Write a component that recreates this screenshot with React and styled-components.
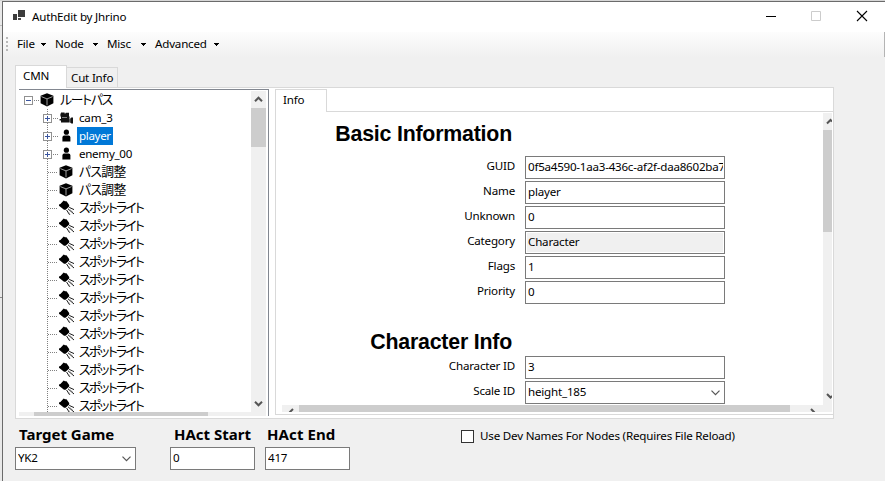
import React from "react";
import styled, { createGlobalStyle, css } from "styled-components";

const Global = createGlobalStyle`
  * { box-sizing: border-box; }
  html, body { margin: 0; height: 100%; overflow: hidden; }
  body {
    background: #e9e9e9;
    color: #000;
    font: 11.6px/16px "Noto Sans", "Noto Sans CJK JP", sans-serif;
  }
`;

const Text = styled.span`
  display: block;
  white-space: pre;
  letter-spacing: ${(p) => p.$ls ?? -0.2}px;
`;

/* ---------- window frame ---------- */
const Desktop = styled.div`
  width: 885px;
  height: 481px;
  padding: 1px 0 0 2px;
  background: linear-gradient(#d6d6d6, #d6d6d6) 0 0 / 100% 1px no-repeat,
    linear-gradient(#bdbdbd, #bdbdbd) 0 25px / 2px 1px no-repeat,
    linear-gradient(#8a8a8a, #8a8a8a) 0 297px / 2px 1px no-repeat, #e9e9e9;
`;
const Window = styled.div`
  height: 480px;
  display: flex;
  flex-direction: column;
  background: #f0f0f0;
  border-top: 1px solid #6b6b6b;
  border-left: 1px solid #6b6b6b;
`;
const TitleBar = styled.header`
  height: 30px;
  flex: none;
  display: flex;
  align-items: center;
  padding: 0 17px 2px 10px;
  background: #fff;
`;
const Title = styled.div`
  flex: 1;
  margin-left: 6px;
  padding-top: 1px;
`;
const Controls = styled.div`
  display: flex;
  gap: 33px;
`;
const MenuBar = styled.nav`
  height: 25px;
  flex: none;
  display: flex;
  align-items: center;
  padding: 0 0 2px 3px;
  background: linear-gradient(#fdfdfd, #f0f0f0);
  border-right: 1px solid #b4b4b4;
`;
const Grip = styled.i`
  width: 2px;
  height: 14px;
  margin: 1px 9px 0 0;
  background: repeating-linear-gradient(#b9b9b9 0 2px, transparent 2px 4px);
`;
const MenuItem = styled.div`
  width: ${(p) => p.$w}px;
  padding-right: 9px;
  display: flex;
  align-items: center;
  justify-content: space-between;
`;
const MenuArrow = styled.svg`
  display: block;
  flex: none;
  margin-top: 2px;
`;

/* ---------- outer tabs ---------- */
const TabStrip = styled.div`
  height: 23px;
  flex: none;
  display: flex;
  align-items: flex-end;
  margin: 8px 0 -1px 12px;
`;
const OuterTab = styled.div`
  position: relative;
  width: ${(p) => p.$w}px;
  height: ${(p) => (p.$active ? 23 : 21)}px;
  padding: ${(p) => (p.$active ? "2px 0 0 7px" : "2px 0 0 4px")};
  background: ${(p) => (p.$active ? "#fff" : "#f0f0f0")};
  border: 1px solid #d9d9d9;
  border-bottom: ${(p) => (p.$active ? "0" : "1px solid #d9d9d9")};
  ${(p) => !p.$active && css`border-left: 0;`}
`;
const Page = styled.main`
  width: 819px;
  height: 332px;
  flex: none;
  display: flex;
  margin-left: 12px;
  padding: 1px 1px 2px 3px;
  background: #fff;
  border: 1px solid #d9d9d9;
`;

/* ---------- tree ---------- */
const TreeBox = styled.section`
  width: 250px;
  height: 327px;
  flex: none;
  display: grid;
  grid-template-columns: 232px 15px;
  grid-template-rows: 321px 4px;
  padding: 1px 2px 1px 0;
  border-top: 1px solid #828790;
  border-right: 1px solid #828790;
`;
const Rows = styled.div`
  overflow: hidden;
  padding-left: 5px;
`;
const RowLine = styled.div`
  height: 18px;
  display: flex;
  align-items: center;
`;
const Guide = styled.svg`
  flex: none;
  display: block;
`;
const IconCell = styled.span`
  width: 18px;
  height: 18px;
  flex: none;
  display: flex;
  align-items: center;
`;
const Label = styled.span`
  height: 18px;
  padding: 0 2px;
  line-height: 17px;
  white-space: pre;
  letter-spacing: ${(p) => p.$ls}px;
  background: ${(p) => (p.$selected ? "#0078d7" : "transparent")};
  color: ${(p) => (p.$selected ? "#fff" : "#000")};
  ${(p) =>
    p.$jp &&
    css`
      font-family: "Noto Sans CJK JP", sans-serif;
      font-size: 12.8px;
      line-height: 16px;
      font-feature-settings: "palt";
      font-weight: 400;
    `}
`;

/* ---------- scrollbars ---------- */
const Track = styled.div`
  display: flex;
  flex-direction: ${(p) => (p.$horizontal ? "row" : "column")};
  background: #f0f0f0;
  overflow: hidden;
`;
const ScrollButton = styled.div`
  flex: none;
  width: ${(p) => p.$w}px;
  height: ${(p) => p.$h}px;
  display: flex;
  align-items: center;
  justify-content: center;
  overflow: hidden;
`;
const Thumb = styled.div`
  flex: none;
  background: #cdcdcd;
  ${(p) => (p.$horizontal ? css`width: ${p.$size}px; height: 100%;` : css`height: ${p.$size}px; width: 100%;`)}
`;
const Spacer = styled.div`
  flex: 1;
`;

/* ---------- info panel ---------- */
const InfoPane = styled.section`
  width: 558px;
  height: 326px;
  flex: none;
  margin-left: 6px;
  display: flex;
  flex-direction: column;
  border-left: 1px solid #d9d9d9;
  border-bottom: 1px solid #d9d9d9;
`;
const InfoTabs = styled.div`
  display: flex;
  height: 23px;
  flex: none;
`;
const InfoTab = styled.div`
  width: 51px;
  padding: 2px 0 0 7px;
  border-top: 1px solid #d9d9d9;
  border-right: 1px solid #d9d9d9;
`;
const InfoRest = styled.div`
  flex: 1;
  border-bottom: 1px solid #d9d9d9;
`;
const InfoBody = styled.div`
  display: grid;
  grid-template-columns: 541px 9px;
  grid-template-rows: 292px 7px;
  padding: 1px 0 0 6px;
`;
const Form = styled.div`
  overflow: hidden;
  padding-top: 9px;
`;
const Heading = styled.h2`
  width: 230px;
  height: ${(p) => p.$h}px;
  margin: 0;
  margin-top: ${(p) => p.$top ?? 0}px;
  text-align: right;
  white-space: nowrap;
  letter-spacing: -0.2px;
  font: bold 21.33px/24px "Liberation Sans", Arial, sans-serif;
`;
const Field = styled.label`
  display: grid;
  grid-template-columns: 233px 200px;
  column-gap: 10px;
  height: 25px;
`;
const FieldName = styled(Text)`
  text-align: right;
  padding-top: 2px;
`;
const Box = styled.div`
  width: ${(p) => p.$w ?? 200}px;
  height: 23px;
  display: flex;
  align-items: center;
  justify-content: space-between;
  padding: 0 4px 0 2px;
  overflow: hidden;
  border: 1px solid #7a7a7a;
  background: ${(p) => (p.$readOnly ? "#f0f0f0" : "#fff")};
  box-shadow: inset 0 0 0 1px #fff;
`;
const BoxText = styled(Text)`
  overflow: hidden;
  flex: 1;
  margin: 0 -3px 2px 0;
`;

/* ---------- footer ---------- */
const Footer = styled.footer`
  display: flex;
  padding: 5px 0 0 12px;
`;
const Group = styled.div`
  width: ${(p) => p.$w}px;
`;
const GroupTitle = styled.div`
  height: 23px;
  padding-left: ${(p) => p.$pad}px;
  white-space: nowrap;
  font: bold 15px/20px "Noto Sans", sans-serif;
  letter-spacing: ${(p) => p.$ls}px;
`;
const DevNames = styled.label`
  display: flex;
  height: 16px;
  margin: 4px 0 0 101px;
  align-items: center;
  gap: 6px;
`;
const Check = styled.span`
  width: 13px;
  height: 13px;
  border: 1px solid #333;
  background: #fff;
`;

/* ---------- icons ---------- */
const AppIcon = () => (
  <svg width="13" height="12" viewBox="0 0 13 12" shapeRendering="crispEdges">
    <path d="M5 0h7v7H5z" fill="#3c3c3c" />
    <path d="M0 4h4v6H0z" fill="#3c3c3c" />
    <path d="M5 8h3v2H5z" fill="#4c4c4c" />
  </svg>
);
const Cube = () => (
  <svg width="15" height="14" viewBox="0 0 15 14">
    <path d="M7 .2 13.4 2.8V10.2L7 13.6 .6 10.2V2.8Z" fill="#000" />
    <path d="M1.4 3.6 7 5.9 12.6 3.6M7 5.9V12.4" stroke="#c4c4c4" strokeWidth=".8" fill="none" />
  </svg>
);
const Camera = () => (
  <svg width="15" height="14" viewBox="0 0 15 14">
    <path d="M2 1.4h3.6v1.2h1V1.8H10V5.6h.6v6H2V9.6H.6V8H2V5.4H1.4V2.6H2z" fill="#111" />
    <path d="m10 8.6 2.4-2H14v6h-1.6l-2.4-2z" fill="#111" />
    <path d="M3 6.5h5M10.9 6.5v4.7" stroke="#ccc" strokeWidth=".6" />
  </svg>
);
const Person = () => (
  <svg width="15" height="14" viewBox="0 0 15 14">
    <circle cx="7.4" cy="3.2" r="2.6" fill="#000" />
    <path d="M3.4 12.6V8.4Q3.4 6.6 5.2 6.6h4.4q1.8 0 1.8 1.8v4.2z" fill="#000" />
  </svg>
);
const Spot = () => (
  <svg width="17" height="16" viewBox="0 0 17 16">
    <path d="M4.7.4 6 1.3h1.5L10.2 5v1.4L6.6 9.8H5L0 5.7V4.6L1.4 4z" fill="#000" />
    <path d="m10.2 7.4 4.8 2.2M9 8.8l6 5.2M7.6 10l3 4.8" stroke="#000" strokeWidth=".9" />
    <path d="m11 9.6 3 2.6M9.4 11.8l1.8 3" stroke="#777" strokeWidth=".5" />
  </svg>
);
const icons = { cube: Cube, camera: Camera, person: Person, spot: Spot };

const DropArrow = () => (
  <svg width="9" height="6" viewBox="0 0 9 6">
    <path d="m.5.7 4 4 4-4" fill="none" stroke="#555" strokeWidth="1.2" />
  </svg>
);
const turns = { up: 0, right: 90, down: 180, left: 270 };
const Chevron = ({ dir }) => (
  <svg width="9" height="9" viewBox="0 0 9 9">
    <path d="M1 6.2 4.5 2.7 8 6.2" fill="none" stroke="#555" strokeWidth="2" transform={`rotate(${turns[dir]} 4.5 4.5)`} />
  </svg>
);
/* A chevron button only part of which is inside the visible track. */
const CutChevron = ({ d, w, h }) => (
  <svg width={w} height={h} viewBox={`0 0 ${w} ${h}`}>
    <path d={d} fill="none" stroke="#555" strokeWidth="2" />
  </svg>
);

const Branch = ({ level, box }) => {
  const width = level ? 35 : 16;
  const x = level ? 19 : 0;
  return (
    <Guide width={width} height="18" viewBox={`0 0 ${width} 18`} shapeRendering="crispEdges">
      {level > 0 && <path d="M23.5 0v18" stroke="#808080" strokeDasharray="1 1" />}
      <path d={`M${x + (box ? 10 : 5)} 9.5H${width - 1}`} stroke="#808080" strokeDasharray="1 1" />
      {box && (
        <>
          <rect x={x + 0.5} y="5.5" width="8" height="8" fill="#fff" stroke="#919191" />
          <path d={`M${x + 2} 9.5h5`} stroke="#3a559f" />
          {box === "+" && <path d={`M${x + 4.5} 7v5`} stroke="#3a559f" />}
        </>
      )}
    </Guide>
  );
};

const spot = { level: 1, icon: "spot", text: "スポットライト", jp: true, ls: -1.7 };
const nodes = [
  { level: 0, box: "-", icon: "cube", text: "ルートパス", jp: true, ls: -1.2 },
  { level: 1, box: "+", icon: "camera", text: "cam_3", ls: -0.2 },
  { level: 1, box: "+", icon: "person", text: "player", ls: -0.35, selected: true },
  { level: 1, box: "+", icon: "person", text: "enemy_00", ls: -0.3 },
  { level: 1, icon: "cube", text: "パス調整", jp: true, ls: -0.6 },
  { level: 1, icon: "cube", text: "パス調整", jp: true, ls: -0.6 },
  ...Array.from({ length: 12 }, () => spot),
];

const TreeRow = ({ node }) => {
  const Icon = icons[node.icon];
  return (
    <RowLine>
      <Branch level={node.level} box={node.box} />
      <IconCell>
        <Icon />
      </IconCell>
      <Label $jp={node.jp} $ls={node.ls} $selected={node.selected}>
        {node.text}
      </Label>
    </RowLine>
  );
};

const basic = [
  ["GUID", "0f5a4590-1aa3-436c-af2f-daa8602ba7"],
  ["Name", "player"],
  ["Unknown", "0"],
  ["Category", "Character", "readOnly"],
  ["Flags", "1"],
  ["Priority", "0"],
];
const character = [
  ["Character ID", "3"],
  ["Scale ID", "height_185", "select"],
];
const FieldRow = ({ field: [name, value, kind] }) => (
  <Field>
    <FieldName>{name}</FieldName>
    <Box $readOnly={kind === "readOnly"}>
      <BoxText $ls={name === "GUID" ? -0.24 : undefined}>{value}</BoxText>
      {kind === "select" && <DropArrow />}
    </Box>
  </Field>
);

export default function App() {
  return (
    <>
      <Global />
      <Desktop>
        <Window>
          <TitleBar>
            <AppIcon />
            <Title>
              <Text>AuthEdit by Jhrino</Text>
            </Title>
            <Controls>
              <svg width="12" height="12" viewBox="0 0 12 12"><path d="M0 6.5h10" stroke="#000" /></svg>
              <svg width="12" height="12" viewBox="0 0 12 12"><path d="M.5 1.5h9v9h-9z" fill="none" stroke="#ccc" /></svg>
              <svg width="12" height="12" viewBox="0 0 12 12"><path d="m1 1 10 10M11 1 1 11" stroke="#000" strokeWidth="1.1" /></svg>
            </Controls>
          </TitleBar>
          <MenuBar>
            <Grip />
            {[["File", 38], ["Node", 52], ["Misc", 48], ["Advanced", 73]].map(([name, w]) => (
              <MenuItem key={name} $w={w}>
                <Text>{name}</Text>
                <MenuArrow width="5" height="3" shapeRendering="crispEdges">
                  <path d="M0 0h5v1H4v1H3v1H2V2H1V1H0z" />
                </MenuArrow>
              </MenuItem>
            ))}
          </MenuBar>
          <TabStrip>
            <OuterTab $active $w={52}><Text>CMN</Text></OuterTab>
            <OuterTab $w={51}><Text>Cut Info</Text></OuterTab>
          </TabStrip>
          <Page>
            <TreeBox>
              <Rows>
                {nodes.map((node, i) => <TreeRow key={i} node={node} />)}
              </Rows>
              <Track>
                <ScrollButton $w={15} $h={17}><Chevron dir="up" /></ScrollButton>
                <Thumb $size={39} />
                <Spacer />
                <ScrollButton $w={15} $h={17}><Chevron dir="down" /></ScrollButton>
              </Track>
              <Track $horizontal>
                <ScrollButton $w={15} $h={4} />
                <Thumb $horizontal $size={174} />
              </Track>
              <Track />
            </TreeBox>
            <InfoPane>
              <InfoTabs>
                <InfoTab><Text>Info</Text></InfoTab>
                <InfoRest />
              </InfoTabs>
              <InfoBody>
                <Form>
                  <Heading $h={34}>Basic Information</Heading>
                  {basic.map((f) => <FieldRow key={f[0]} field={f} />)}
                  <Heading $h={26} $top={24}>Character Info</Heading>
                  {character.map((f) => <FieldRow key={f[0]} field={f} />)}
                </Form>
                <Track>
                  <ScrollButton $w={9} $h={17}><CutChevron w={9} h={9} d="M4 6.5 7.5 3 9 4.5" /></ScrollButton>
                  <Thumb $size={102} />
                  <Spacer />
                  <ScrollButton $w={9} $h={17}><CutChevron w={9} h={9} d="M4 2 7.5 5.5 9 4" /></ScrollButton>
                </Track>
                <Track $horizontal>
                  <ScrollButton $w={17} $h={7}><CutChevron w={9} h={7} d="M7 4 3.5 7.5" /></ScrollButton>
                  <Thumb $horizontal $size={491} />
                  <Spacer />
                  <ScrollButton $w={17} $h={7}><CutChevron w={9} h={7} d="M1 4 4.5 7.5" /></ScrollButton>
                </Track>
                <Track />
              </InfoBody>
            </InfoPane>
          </Page>
          <Footer>
            <Group $w={155}>
              <GroupTitle $pad={4} $ls={0}>Target Game</GroupTitle>
              <Box $w={121}><BoxText>YK2</BoxText><DropArrow /></Box>
            </Group>
            <Group $w={95}>
              <GroupTitle $pad={4} $ls={0}>HAct Start</GroupTitle>
              <Box $w={85}><BoxText>0</BoxText></Box>
            </Group>
            <Group $w={95}>
              <GroupTitle $pad={2} $ls={0.1}>HAct End</GroupTitle>
              <Box $w={85}><BoxText>417</BoxText></Box>
            </Group>
            <DevNames>
              <Check />
              <Text>Use Dev Names For Nodes (Requires File Reload)</Text>
            </DevNames>
          </Footer>
        </Window>
      </Desktop>
    </>
  );
}
